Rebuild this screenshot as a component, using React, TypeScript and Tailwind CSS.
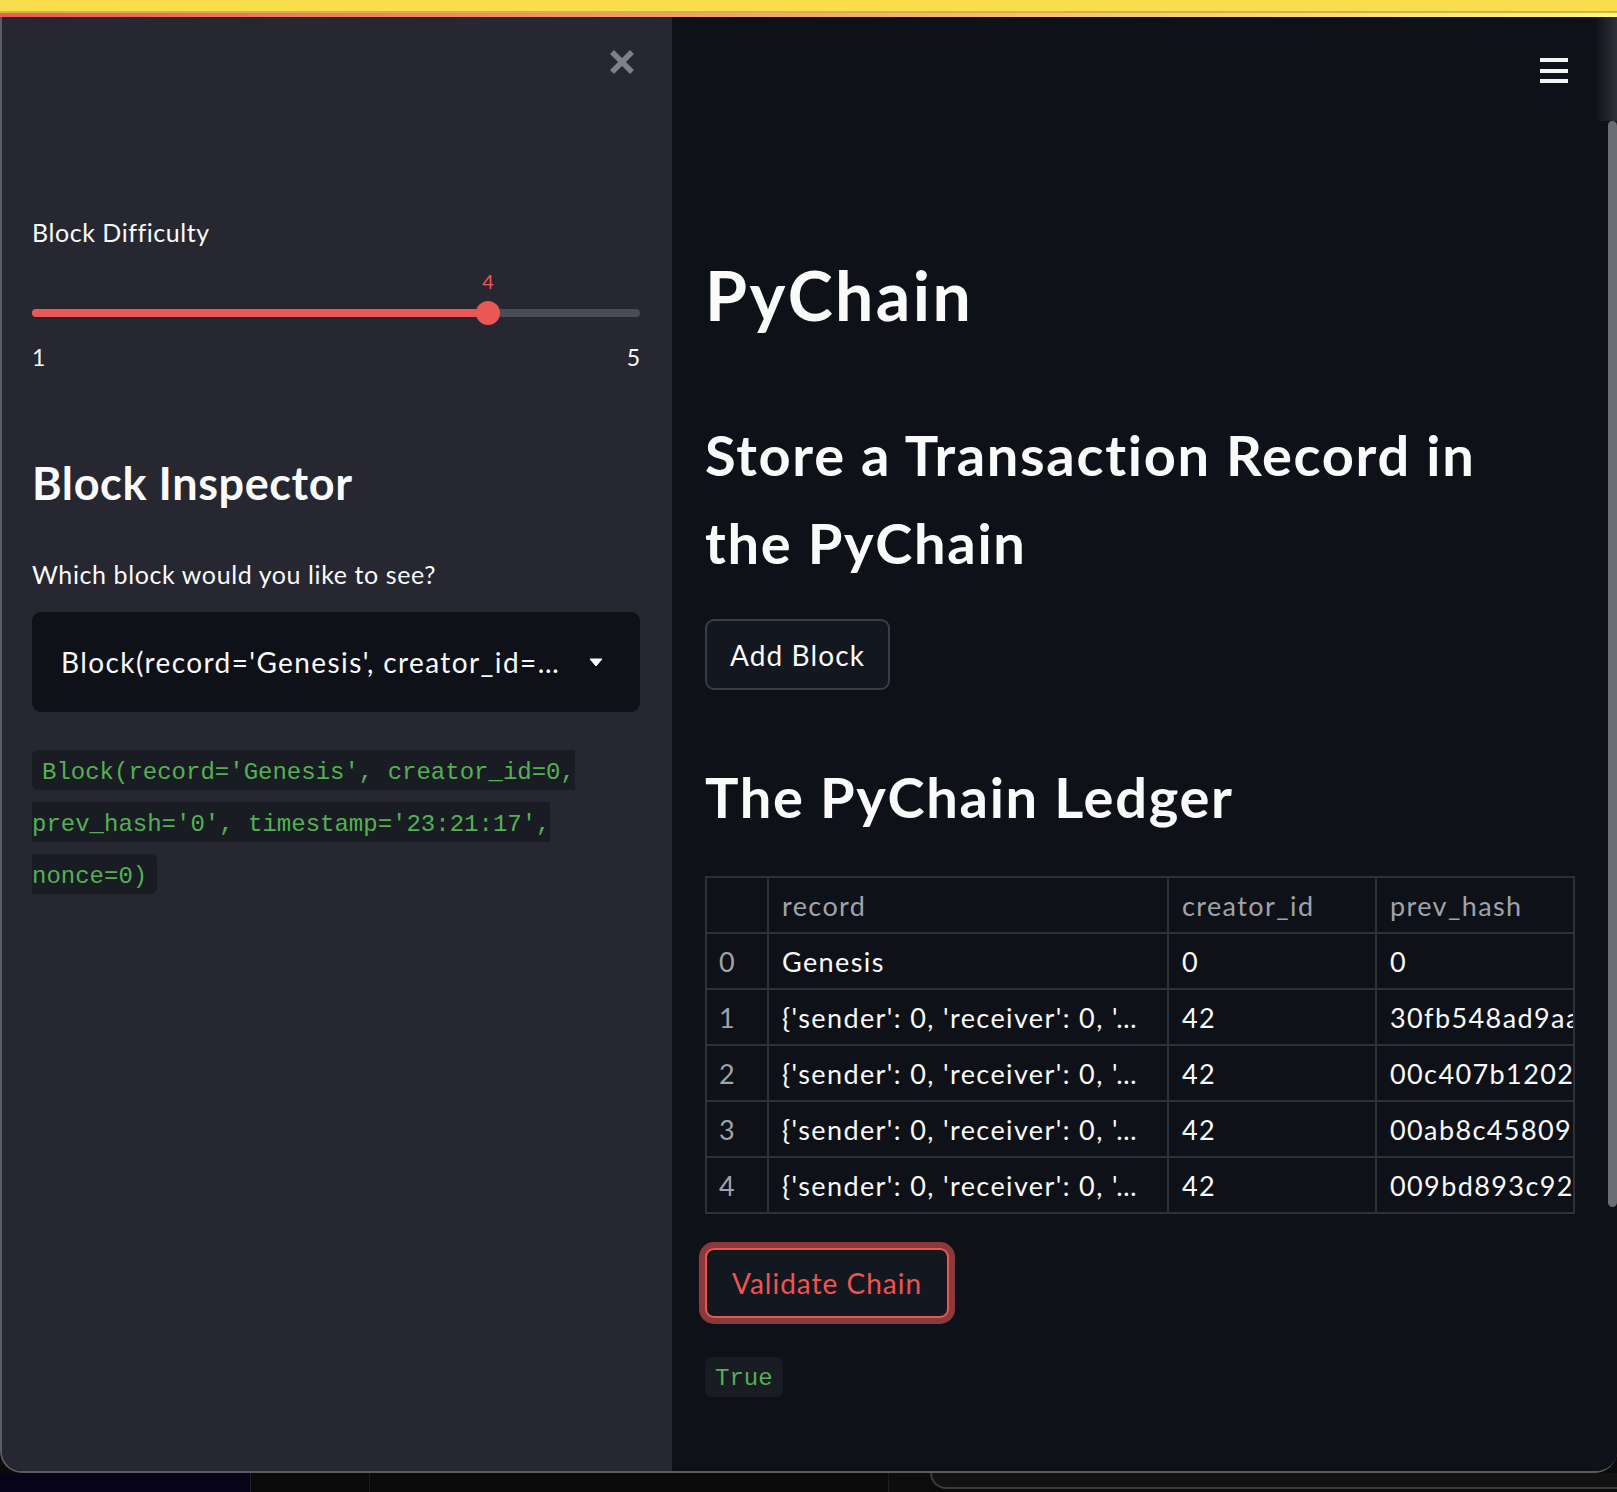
import React from 'react';

interface BlockRow {
  index: number;
  record: string;
  creatorId: string;
  prevHash: string;
}

const ledger: BlockRow[] = [
  { index: 0, record: 'Genesis', creatorId: '0', prevHash: '0' },
  { index: 1, record: "{'sender': 0, 'receiver': 0, '…", creatorId: '42', prevHash: '30fb548ad9aa0e2f7c41' },
  { index: 2, record: "{'sender': 0, 'receiver': 0, '…", creatorId: '42', prevHash: '00c407b120208fd3e915' },
  { index: 3, record: "{'sender': 0, 'receiver': 0, '…", creatorId: '42', prevHash: '00ab8c458097d1b64ac2' },
  { index: 4, record: "{'sender': 0, 'receiver': 0, '…", creatorId: '42', prevHash: '009bd893c925b6e0172f' },
];

const difficulty = { min: 1, max: 5, value: 4 };

const CloseIcon = () => (
  <svg width="28" height="28" viewBox="0 0 28 28">
    <line x1="4" y1="4" x2="24" y2="24" stroke="#808088" strokeWidth="5.5" />
    <line x1="24" y1="4" x2="4" y2="24" stroke="#808088" strokeWidth="5.5" />
  </svg>
);

const MenuIcon = () => (
  <svg width="28" height="25" viewBox="0 0 28 25">
    <rect x="0" y="0" width="28" height="4" fill="#f4f4f5" />
    <rect x="0" y="11" width="28" height="4" fill="#f4f4f5" />
    <rect x="0" y="21" width="28" height="4" fill="#f4f4f5" />
  </svg>
);

const Caret = () => (
  <svg width="14" height="9" viewBox="0 0 14 9">
    <path d="M1 1 L13 1 L7 8 Z" fill="#fafafa" stroke="#fafafa" strokeWidth="1" strokeLinejoin="round" />
  </svg>
);

const Sidebar = () => {
  const pct = ((difficulty.value - difficulty.min) / (difficulty.max - difficulty.min)) * 100;

  return (
    <div className="flex w-[670px] shrink-0 flex-col bg-[#262730] pl-[30px] pr-[32px] pt-[31px] text-[#fafafa]">
      <div className="flex justify-end pr-[4px]">
        <CloseIcon />
      </div>

      <p className="mt-[144px] text-[25px] leading-none tracking-[0.55px]">Block Difficulty</p>

      {/* slider */}
      <div className="mt-[26px]">
        <div className="relative h-[20px] text-[20px] leading-none text-[#ea5854]">
          <span className="absolute -translate-x-1/2" style={{ left: `${pct}%` }}>
            {difficulty.value}
          </span>
        </div>
        <div className="relative mt-[18px] h-[8px] rounded-full bg-[#4a4b55]">
          <div className="h-full rounded-full bg-[#ea5854]" style={{ width: `${pct}%` }} />
          <div
            className="absolute top-1/2 h-[24px] w-[24px] -translate-x-1/2 -translate-y-1/2 rounded-full bg-[#ea5854]"
            style={{ left: `${pct}%` }}
          />
        </div>
        <div className="mt-[29px] flex justify-between text-[23px] leading-none">
          <span>{difficulty.min}</span>
          <span>{difficulty.max}</span>
        </div>
      </div>

      <h2 className="mt-[92px] text-[45px] font-bold leading-none tracking-[0.6px]">Block Inspector</h2>

      <p className="mt-[56px] text-[25px] leading-none tracking-[0.6px]">Which block would you like to see?</p>

      <div className="mt-[25px] flex h-[100px] items-center justify-between rounded-[9px] bg-[#0e1117] pl-[29px] pr-[37px]">
        <span className="whitespace-nowrap text-[28px] leading-none tracking-[1.4px]">
          Block(record='Genesis', creator_id=…
        </span>
        <Caret />
      </div>

      <div className="mt-[35px] font-['Liberation_Mono',monospace] text-[24px] leading-[52px]">
        <code className="rounded-[6px] bg-[#1a1c23] px-[10px] pb-[4px] pt-[9px] text-[#53b153]">
          Block(record='Genesis', creator_id=0, prev_hash='0', timestamp='23:21:17', nonce=0)
        </code>
      </div>
    </div>
  );
};

const Ledger = () => (
  <div className="mt-[51px] w-[870px] overflow-hidden border-x-2 border-t-2 border-[#2f3138]">
    <div className="grid w-[1000px] grid-cols-[62px_400px_208px_330px] text-[27px] leading-none tracking-[1.4px]">
      {['', 'record', 'creator_id', 'prev_hash'].map((h, i) => (
        <div
          key={i}
          className="flex h-[56px] items-center whitespace-nowrap border-b-2 border-r-2 border-[#2f3138] pl-[13px] text-[#a0a3aa]"
        >
          {h}
        </div>
      ))}
      {ledger.map((b) => (
        <React.Fragment key={b.index}>
          <div className="flex h-[56px] items-center border-b-2 border-r-2 border-[#2f3138] pl-[12px] text-[#a0a3aa]">
            {b.index}
          </div>
          <div className="flex h-[56px] items-center whitespace-nowrap border-b-2 border-r-2 border-[#2f3138] pl-[13px]">
            {b.record}
          </div>
          <div className="flex h-[56px] items-center border-b-2 border-r-2 border-[#2f3138] pl-[13px]">
            {b.creatorId}
          </div>
          <div className="flex h-[56px] items-center whitespace-nowrap border-b-2 border-r-2 border-[#2f3138] pl-[13px]">
            {b.prevHash}
          </div>
        </React.Fragment>
      ))}
    </div>
  </div>
);

const Main = () => (
  <div className="relative flex-1 bg-[#0e1117] pl-[33px] pt-[244px] text-[#fafafa]">
    <div className="pointer-events-none absolute right-0 top-0 h-[104px] w-[22px] bg-linear-to-l from-[#30313a] to-transparent" />
    <div className="absolute right-[49px] top-[41px]">
      <MenuIcon />
    </div>
    <div className="absolute right-0 top-[104px] h-[1086px] w-[9px] rounded-full bg-[#6c6d72]" />

    <h1 className="text-[68px] font-bold leading-none tracking-[2.4px]">PyChain</h1>

    <h2 className="mt-[82px] max-w-[820px] text-[56px] font-bold leading-[88px] tracking-[1.7px]">
      Store a Transaction Record in the PyChain
    </h2>

    <button className="mt-[32px] flex h-[71px] items-center rounded-[9px] border-2 border-[#3b3d44] bg-[#131720] px-[23px] text-[28px] leading-none tracking-[1.1px]">
      Add Block
    </button>

    <h2 className="mt-[79px] text-[56px] font-bold leading-none tracking-[1.7px]">The PyChain Ledger</h2>

    <Ledger />

    <button className="mt-[34px] flex h-[70px] items-center rounded-[9px] border-2 border-[#f0544f] bg-[#131720] px-[25px] text-[28px] leading-none tracking-[1px] text-[#f0544f] shadow-[0_0_0_6px_#8a3a3c]">
      Validate Chain
    </button>

    <div className="mt-[39px]">
      <code className="inline-block rounded-[6px] bg-[#1a1c23] px-[10px] pb-[6px] pt-[10px] font-['Liberation_Mono',monospace] text-[24px] leading-none text-[#53b153]">
        True
      </code>
    </div>
  </div>
);

export default function App() {
  return (
    <div className="relative h-[1492px] w-[1617px] overflow-hidden bg-[#0b0b0c] font-['Lato',sans-serif]">
      <div className="h-[11px] bg-[#f9dd4c]" />
      <div className="h-[2px] bg-[#d2b53d]" />
      <div className="h-[4px] bg-linear-to-r from-[#ee5a5a] via-[#f7a873] to-[#fdf68d]" />

      <div className="flex h-[1456px] overflow-hidden rounded-b-[22px] border-b-2 border-l-2 border-[#5b5c62]">
        <Sidebar />
        <Main />
      </div>

      <div className="flex h-[19px]">
        <div className="w-[250px] bg-[#07041a]" />
        <div className="w-[119px] border-l border-[#202124] bg-[#0b0b0b]" />
        <div className="w-[519px] border-l border-[#1b1b1c] bg-[#0b0b0b]" />
        <div className="w-[42px] border-l border-[#1e1e20] bg-[#0d0d0d]" />
        <div className="h-[16px] flex-1 rounded-bl-[16px] border-b-2 border-l-2 border-[#3a3b3b] bg-[#121212]" />
      </div>
    </div>
  );
}
